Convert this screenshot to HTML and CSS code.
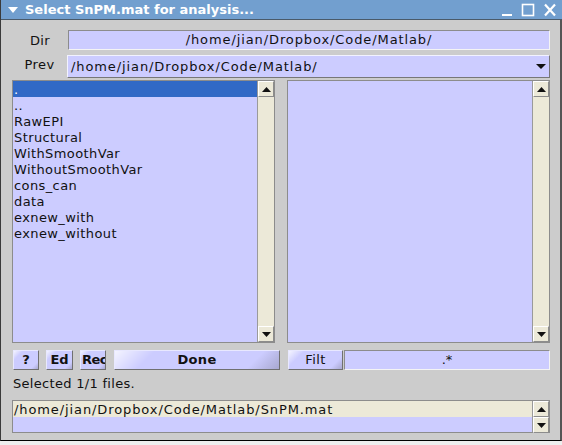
FILE: index.html
```html
<!DOCTYPE html>
<html>
<head>
<meta charset="utf-8">
<link rel="stylesheet" href="styles.css">
</head>
<body>
<div class="window">
  <div class="titlebar">
    <svg class="menu-tri" width="12" height="8" viewBox="0 0 12 8"><path d="M1 1 L11 1 L6 7 Z" fill="#fff"/></svg>
    <span class="title">Select SnPM.mat for analysis...</span>
    <div class="controls">
      <svg width="12" height="14" viewBox="0 0 12 14"><rect x="1" y="11" width="10" height="2" fill="#fff"/></svg>
      <svg width="14" height="14" viewBox="0 0 14 14"><rect x="1.5" y="1.5" width="11" height="11" fill="none" stroke="#fff" stroke-width="1.6"/></svg>
      <svg width="14" height="14" viewBox="0 0 14 14"><path d="M2 1.5 L12 12.5 M12 1.5 L2 12.5" stroke="#fff" stroke-width="2.2"/></svg>
    </div>
  </div>
  <div class="content">
    <div class="row dir-row">
      <span class="label">Dir</span>
      <div class="field centered path">/home/jian/Dropbox/Code/Matlab/</div>
    </div>
    <div class="row prev-row">
      <span class="label">Prev</span>
      <div class="popup">
        <span class="path">/home/jian/Dropbox/Code/Matlab/</span>
        <svg width="10" height="6" viewBox="0 0 10 6"><path d="M0 0 L10 0 L5 5 Z" fill="#111"/></svg>
      </div>
    </div>
    <div class="lists">
      <div class="listbox">
        <div class="items">
          <div class="item selected">.</div>
          <div class="item">..</div>
          <div class="item">RawEPI</div>
          <div class="item">Structural</div>
          <div class="item">WithSmoothVar</div>
          <div class="item">WithoutSmoothVar</div>
          <div class="item">cons_can</div>
          <div class="item">data</div>
          <div class="item">exnew_with</div>
          <div class="item">exnew_without</div>
        </div>
        <div class="scrollbar">
          <div class="sb-btn"><svg width="9" height="5" viewBox="0 0 9 5"><path d="M0 5 L9 5 L4.5 0 Z" fill="#111"/></svg></div>
          <div class="sb-track"></div>
          <div class="sb-btn"><svg width="9" height="5" viewBox="0 0 9 5"><path d="M0 0 L9 0 L4.5 5 Z" fill="#111"/></svg></div>
        </div>
      </div>
      <div class="listbox">
        <div class="items"></div>
        <div class="scrollbar">
          <div class="sb-btn"><svg width="9" height="5" viewBox="0 0 9 5"><path d="M0 5 L9 5 L4.5 0 Z" fill="#111"/></svg></div>
          <div class="sb-track"></div>
          <div class="sb-btn"><svg width="9" height="5" viewBox="0 0 9 5"><path d="M0 0 L9 0 L4.5 5 Z" fill="#111"/></svg></div>
        </div>
      </div>
    </div>
    <div class="buttons">
      <div class="btn bold b-q">?</div>
      <div class="btn bold b-ed">Ed</div>
      <div class="btn bold b-rec">Rec</div>
      <div class="btn bold b-done">Done</div>
      <div class="btn b-filt">Filt</div>
      <div class="field centered filter">.*</div>
    </div>
    <div class="status">Selected 1/1 files.</div>
    <div class="selbox">
      <div class="sel-rows">
        <div class="sel-row beige path">/home/jian/Dropbox/Code/Matlab/SnPM.mat</div>
        <div class="sel-row"></div>
      </div>
      <div class="scrollbar small">
        <div class="sb-btn"><svg width="9" height="5" viewBox="0 0 9 5"><path d="M0 5 L9 5 L4.5 0 Z" fill="#111"/></svg></div>
        <div class="sb-btn"><svg width="9" height="5" viewBox="0 0 9 5"><path d="M0 0 L9 0 L4.5 5 Z" fill="#111"/></svg></div>
      </div>
    </div>
  </div>
</div>
<div class="strip"></div>
</body>
</html>
```

FILE: styles.css
```css
html, body {
  margin: 0;
  padding: 0;
  background: #eeeeee;
  font-family: "DejaVu Sans", sans-serif;
  font-size: 13px;
  color: #111;
}
.window {
  width: 562px;
  height: 441px;
  box-sizing: border-box;
  background: #cccccc;
  border-left: 1px solid #3a3a3a;
  border-right: 2px solid #555;
  border-bottom: 1px solid #000;
  display: flex;
  flex-direction: column;
}
.titlebar {
  height: 19px;
  background: #729fcf;
  border-bottom: 1px solid #4a5a6a;
  display: flex;
  align-items: center;
  color: #fff;
  flex: none;
  margin-right: -2px;
}
.menu-tri {
  margin-left: 6px;
  margin-top: 1px;
}
.title {
  margin-left: 6px;
  font-weight: bold;
  font-size: 13px;
  letter-spacing: 0;
}
.controls {
  margin-left: auto;
  margin-right: 5px;
  display: flex;
  gap: 8px;
  align-items: center;
}
.content {
  padding: 0 10px 0 11px;
  display: flex;
  flex-direction: column;
}
.row {
  display: flex;
  align-items: center;
}
.label {
  width: 56px;
  text-align: center;
  flex: none;
  letter-spacing: 0.4px;
}
.path {
  letter-spacing: 0.9px;
}
.dir-row {
  margin-top: 10px;
  height: 20px;
}
.field {
  box-sizing: border-box;
  height: 20px;
  background: #ccccff;
  border: 1px solid;
  border-color: #8c8c8c #f4f4f4 #f4f4f4 #8c8c8c;
  line-height: 18px;
  flex: 1;
}
.centered {
  text-align: center;
}
.prev-row {
  margin-top: 5px;
  height: 23px;
}
.prev-row .label {
  width: 55px;
  margin-top: -4px;
}
.popup {
  flex: 1;
  box-sizing: border-box;
  height: 23px;
  background: #ccccff;
  border: 1px solid;
  border-color: #f2f2ff #777 #777 #f2f2ff;
  display: flex;
  align-items: center;
  padding-left: 3px;
  padding-right: 3px;
}
.popup span {
  flex: 1;
}
.lists {
  margin-top: 2px;
  display: flex;
  gap: 12px;
  height: 263px;
}
.listbox {
  flex: none;
  width: 263px;
  box-sizing: border-box;
  border: 1px solid #8c8c8c;
  background: #ccccff;
  display: flex;
}
.items {
  flex: 1;
}
.item {
  height: 16px;
  line-height: 17px;
  padding-left: 1px;
  white-space: nowrap;
  letter-spacing: 0.4px;
}
.item.selected {
  background: #3169c6;
  color: #fff;
}
.scrollbar {
  width: 16px;
  flex: none;
  display: flex;
  flex-direction: column;
  border-left: 1px solid #9a9a9a;
  background: #ece9d8;
}
.sb-btn {
  height: 16px;
  box-sizing: border-box;
  border: 1px solid;
  border-color: #fff #8c8c8c #8c8c8c #fff;
  background: #ece9d8;
  display: flex;
  align-items: center;
  justify-content: center;
  flex: none;
}
.sb-track {
  flex: 1;
  background: #ece9d8;
}
.buttons {
  margin-top: 7px;
  height: 20px;
  display: flex;
  align-items: stretch;
}
.btn {
  box-sizing: border-box;
  border: 1px solid;
  border-color: #e8e8ff #707070 #707070 #e8e8ff;
  background: linear-gradient(135deg, #f4f4ff 0%, #ccccff 22%, #ccccff 82%, #a8a8d0 100%);
  text-align: center;
  line-height: 18px;
  overflow: hidden;
  white-space: nowrap;
  flex: none;
}
.bold {
  font-weight: bold;
}
.b-q { width: 26px; margin-left: 1px; }
.b-ed { width: 27px; margin-left: 7px; }
.b-rec { width: 26px; margin-left: 7px; text-align: left; padding-left: 1px; letter-spacing: -0.6px; }
.b-done { width: 166px; margin-left: 8px; letter-spacing: 0.3px; }
.b-filt { width: 55px; margin-left: 8px; letter-spacing: 0.4px; }
.filter {
  flex: 1;
  margin-left: 1px;
}
.status {
  margin-top: 6px;
  height: 16px;
  line-height: 16px;
  padding-left: 1px;
  letter-spacing: 0.3px;
}
.selbox {
  margin-top: 8px;
  height: 33px;
  box-sizing: border-box;
  border: 1px solid #8c8c8c;
  background: #ccccff;
  display: flex;
}
.sel-rows {
  flex: 1;
}
.sel-row {
  height: 16px;
  line-height: 17px;
  padding-left: 1px;
}
.sel-row.beige {
  background: #ece9d8;
}
.strip {
  height: 4px;
  background: #eeeeee;
}
```
